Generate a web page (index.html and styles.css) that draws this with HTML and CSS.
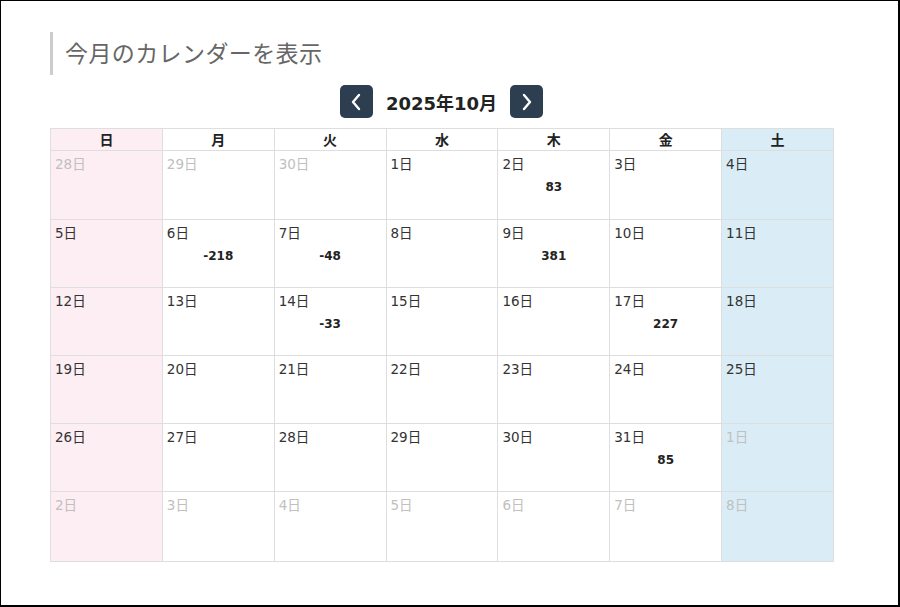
FILE: index.html
```html
<!DOCTYPE html>
<html lang="ja">
<head>
<meta charset="utf-8">
<title>今月のカレンダー</title>
<link rel="stylesheet" href="styles.css">
</head>
<body>
<div class="frame">
  <h2 class="heading">今月のカレンダーを表示</h2>
  <div class="nav">
    <button class="navbtn" aria-label="前月">
      <svg width="14" height="20" viewBox="0 0 14 20"><path d="M10 3 L4 10 L10 17" fill="none" stroke="#fff" stroke-width="2.4" stroke-linecap="round" stroke-linejoin="round"/></svg>
    </button>
    <span class="month">2025年10月</span>
    <button class="navbtn" aria-label="翌月">
      <svg width="14" height="20" viewBox="0 0 14 20"><path d="M4 3 L10 10 L4 17" fill="none" stroke="#fff" stroke-width="2.4" stroke-linecap="round" stroke-linejoin="round"/></svg>
    </button>
  </div>
  <table class="cal">
    <thead>
      <tr><th class="sun">日</th><th>月</th><th>火</th><th>水</th><th>木</th><th>金</th><th class="sat">土</th></tr>
    </thead>
    <tbody>
      <tr class="r1">
        <td class="sun other"><span class="d">28日</span></td>
        <td class="other"><span class="d">29日</span></td>
        <td class="other"><span class="d">30日</span></td>
        <td><span class="d">1日</span></td>
        <td><span class="d">2日</span><span class="v">83</span></td>
        <td><span class="d">3日</span></td>
        <td class="sat"><span class="d">4日</span></td>
      </tr>
      <tr>
        <td class="sun"><span class="d">5日</span></td>
        <td><span class="d">6日</span><span class="v">-218</span></td>
        <td><span class="d">7日</span><span class="v">-48</span></td>
        <td><span class="d">8日</span></td>
        <td><span class="d">9日</span><span class="v">381</span></td>
        <td><span class="d">10日</span></td>
        <td class="sat"><span class="d">11日</span></td>
      </tr>
      <tr>
        <td class="sun"><span class="d">12日</span></td>
        <td><span class="d">13日</span></td>
        <td><span class="d">14日</span><span class="v">-33</span></td>
        <td><span class="d">15日</span></td>
        <td><span class="d">16日</span></td>
        <td><span class="d">17日</span><span class="v">227</span></td>
        <td class="sat"><span class="d">18日</span></td>
      </tr>
      <tr>
        <td class="sun"><span class="d">19日</span></td>
        <td><span class="d">20日</span></td>
        <td><span class="d">21日</span></td>
        <td><span class="d">22日</span></td>
        <td><span class="d">23日</span></td>
        <td><span class="d">24日</span></td>
        <td class="sat"><span class="d">25日</span></td>
      </tr>
      <tr>
        <td class="sun"><span class="d">26日</span></td>
        <td><span class="d">27日</span></td>
        <td><span class="d">28日</span></td>
        <td><span class="d">29日</span></td>
        <td><span class="d">30日</span></td>
        <td><span class="d">31日</span><span class="v">85</span></td>
        <td class="sat other"><span class="d">1日</span></td>
      </tr>
      <tr class="r6">
        <td class="sun other"><span class="d">2日</span></td>
        <td class="other"><span class="d">3日</span></td>
        <td class="other"><span class="d">4日</span></td>
        <td class="other"><span class="d">5日</span></td>
        <td class="other"><span class="d">6日</span></td>
        <td class="other"><span class="d">7日</span></td>
        <td class="sat other"><span class="d">8日</span></td>
      </tr>
    </tbody>
  </table>
</div>
</body>
</html>
```

FILE: styles.css
```css
html, body {
  margin: 0;
  padding: 0;
  background: #fff;
}
body {
  font-family: "DejaVu Sans", "Noto Sans CJK JP", sans-serif;
  color: #333;
}
.frame {
  box-sizing: border-box;
  width: 900px;
  height: 607px;
  border-top: 1px solid #000;
  border-left: 1px solid #000;
  border-right: 2px solid #000;
  border-bottom: 2px solid #000;
  padding: 31px 0 0 49px;
}
.heading {
  margin: 0;
  width: 783px;
  box-sizing: border-box;
  border-left: 3px solid #ccc;
  padding-left: 12px;
  height: 43px;
  line-height: 41px;
  font-family: "Noto Sans CJK JP", sans-serif;
  font-weight: normal;
  font-size: 23px;
  color: #666;
  letter-spacing: 0.4px;
}
.nav {
  width: 783px;
  display: flex;
  justify-content: center;
  align-items: center;
  margin-top: 10px;
  height: 33px;
  gap: 12px;
}
.navbtn {
  width: 33px;
  height: 33px;
  border: none;
  border-radius: 5px;
  background: #2c3e50;
  padding: 0;
  display: flex;
  align-items: center;
  justify-content: center;
}
.month {
  font-size: 18px;
  font-weight: bold;
  color: #222;
  padding: 0 1px;
}
.cal {
  margin-top: 10px;
  width: 784px;
  border-collapse: collapse;
  table-layout: fixed;
}
.cal th, .cal td {
  border: 1px solid #dedede;
}
.cal th {
  height: 21px;
  padding: 0;
  font-family: "Noto Sans CJK JP", sans-serif;
  font-size: 14px;
  font-weight: bold;
  color: #222;
  text-align: center;
  line-height: 21px;
}
.cal td {
  height: 68px;
  padding: 3px 4px 0 4px;
  vertical-align: top;
  box-sizing: border-box;
}
.cal tr.r1 td { height: 69px; }
.cal tr.r6 td { height: 70px; }
.d {
  display: block;
  font-size: 13.5px;
  line-height: 20px;
  color: #333;
}
.other .d {
  color: #c0c0c0;
}
.v {
  display: block;
  text-align: center;
  font-size: 12px;
  font-weight: bold;
  color: #222;
  margin-top: 5px;
  line-height: 16px;
}
.sun {
  background: #fdeef3;
}
.sat {
  background: #daedf7;
}
```
